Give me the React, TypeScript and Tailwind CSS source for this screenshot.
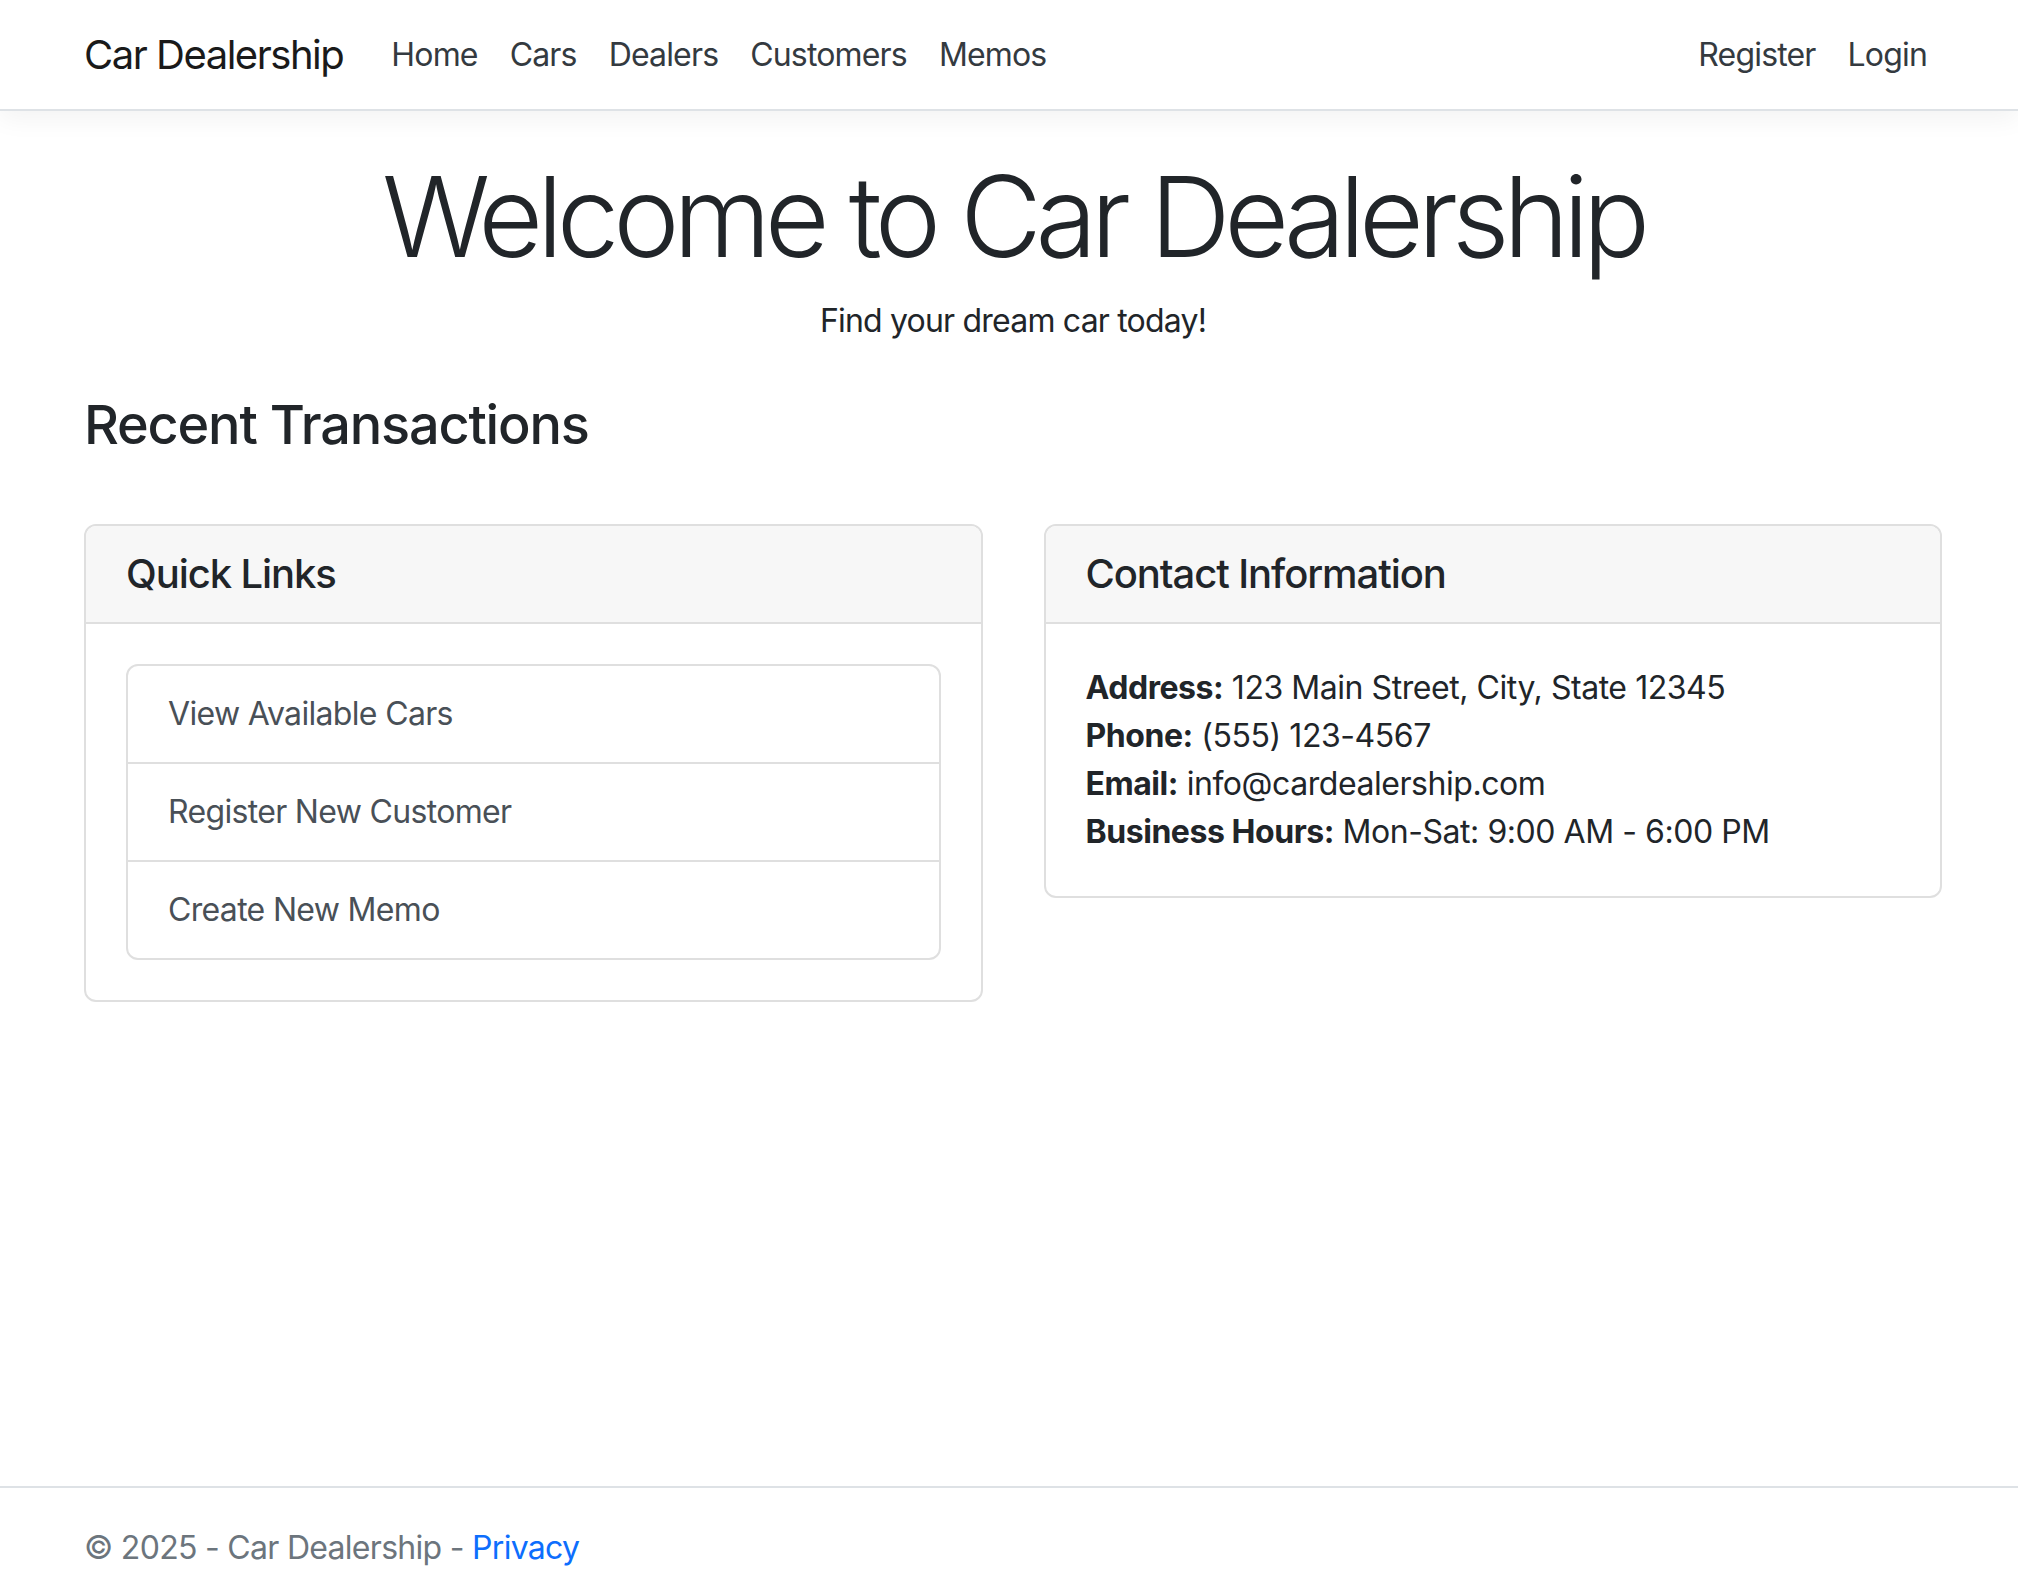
const navLinks = ['Home', 'Cars', 'Dealers', 'Customers', 'Memos'];
const quickLinks = ['View Available Cars', 'Register New Customer', 'Create New Memo'];

const contactRows = [
  { label: 'Address:', value: '123 Main Street, City, State 12345' },
  { label: 'Phone:', value: '(555) 123-4567' },
  { label: 'Email:', value: 'info@cardealership.com' },
  { label: 'Business Hours:', value: 'Mon-Sat: 9:00 AM - 6:00 PM' },
];

const Card = ({ title, children }: { title: string; children: React.ReactNode }) => (
  <div className="rounded-[12px] border-2 border-[#dfdfdf] bg-white">
    <div className="rounded-t-[10px] border-b-2 border-[#dfdfdf] bg-[#f7f7f7] px-[40px] py-[24px]">
      <h5 className="text-[40px] font-medium leading-[48px] tracking-[-0.027em] text-[#212529]">{title}</h5>
    </div>
    <div className="p-[40px]">{children}</div>
  </div>
);

export default function App() {
  return (
    <div
      className="flex h-[1592px] flex-col overflow-hidden bg-white text-[#212529]"
      style={{ fontFamily: 'Inter, "Noto Sans", sans-serif' }}
    >
      {/* Navbar */}
      <nav className="relative z-10 h-[111px] border-b-2 border-[#dee2e6] bg-white shadow-[0_8px_24px_rgba(0,0,0,0.05)]">
        <div className="flex h-full items-center pl-[84px] pr-[75px]">
          <a className="mr-[32px] text-[40px] leading-[60px] tracking-[-0.037em] text-[#1a1a1a]">Car Dealership</a>
          <ul className="flex">
            {navLinks.map((l) => (
              <li key={l}>
                <a className="block px-[16px] text-[32px] leading-[48px] tracking-[-0.026em] text-[#343a40]">{l}</a>
              </li>
            ))}
          </ul>
          <ul className="ml-auto flex">
            {['Register', 'Login'].map((l) => (
              <li key={l}>
                <a className="block px-[16px] text-[32px] leading-[48px] tracking-[-0.026em] text-[#343a40]">{l}</a>
              </li>
            ))}
          </ul>
        </div>
      </nav>

      {/* Main */}
      <main className="flex-1 pl-[84px] pr-[76px] pt-[38px]">
        <div className="text-center">
          <h1 className="mb-[14px] text-[112px] font-light leading-[1.2] tracking-[-0.056em]">
            Welcome to Car Dealership
          </h1>
          <p className="mb-[48px] text-[32px] leading-[48px] tracking-[-0.025em]">Find your dream car today!</p>
        </div>

        <h2 className="mb-[66px] text-[54px] font-medium leading-[1.2] tracking-[-0.022em]">Recent Transactions</h2>

        <div className="grid grid-cols-2 items-start gap-[61px]">
          <Card title="Quick Links">
            <div className="overflow-hidden rounded-[12px] border-2 border-[#dfdfdf]">
              {quickLinks.map((l, i) => (
                <a
                  key={l}
                  className={
                    'block px-[40px] py-[24px] text-[32px] leading-[48px] tracking-[-0.021em] text-[#495057]' +
                    (i > 0 ? ' border-t-2 border-[#dfdfdf]' : '')
                  }
                >
                  {l}
                </a>
              ))}
            </div>
          </Card>

          <Card title="Contact Information">
            <div className="text-[32px] leading-[48px] tracking-[-0.014em]">
              {contactRows.map((r) => (
                <div key={r.label}>
                  <strong className="font-bold">{r.label}</strong> {r.value}
                </div>
              ))}
            </div>
          </Card>
        </div>
      </main>

      {/* Footer */}
      <footer className="h-[106px] shrink-0 overflow-hidden whitespace-nowrap border-t-2 border-[#dee2e6] pl-[84px] text-[32px] leading-[120px] tracking-[-0.022em] text-[#6c757d]">
        © 2025 - Car Dealership - <a className="text-[#0d6efd]">Privacy</a>
      </footer>
    </div>
  );
}
